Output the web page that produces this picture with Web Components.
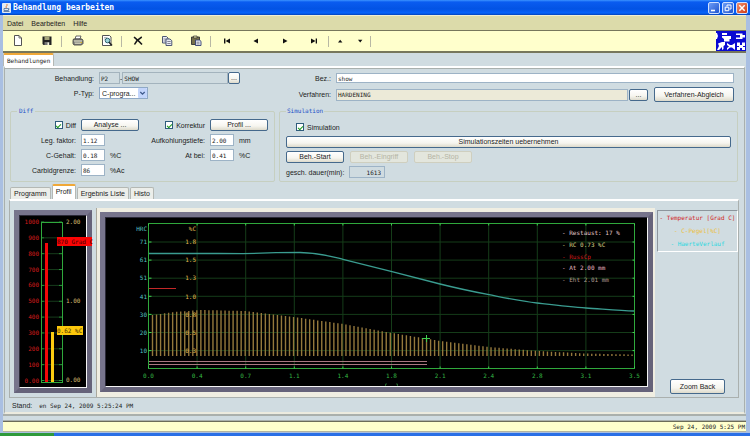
<!DOCTYPE html>
<html lang="de">
<head>
<meta charset="utf-8">
<title>Behandlung bearbeiten</title>
<style>
  html { height: 100%; }
  body { margin: 0; min-height: 100%; display: flex; background: #a9bfe2; }
  app-window { flex: 1; }
</style>
</head>
<body>
<app-window></app-window>
<script>
const BASE_CSS = `
  *, *::before, *::after { box-sizing: border-box; }
  :host { font: 7px/9px "Liberation Sans", Arial, sans-serif; color: #1c1c1c; }
  button, input, select { font: inherit; color: inherit; margin: 0; padding: 0; border-radius: 0; min-width: 0; }
  button { cursor: pointer; }
`;
const MONO = `"DejaVu Sans Mono", "Liberation Mono", monospace`;

class BaseElement extends HTMLElement {
  constructor() { super(); this.attachShadow({ mode: "open" }); }
  connectedCallback() {
    this.shadowRoot.innerHTML = `<style>${BASE_CSS}${this.styles()}</style>${this.render()}`;
  }
  attr(name, fallback = "") { return this.hasAttribute(name) ? this.getAttribute(name) : fallback; }
  styles() { return ""; }
  render() { return "<slot></slot>"; }
}

/* ---------- window chrome ---------- */
class TitleBar extends BaseElement {
  styles() { return `
    :host { display: flex; align-items: center; height: 15px; padding: 0 2px; gap: 2px;
      background: linear-gradient(#3c93ff 0, #0a5cf0 2px, #0353e4 9px, #0664fb 13px, #0242b8 15px); color: #fff; }
    h1 { flex: 1; margin: 0; font: bold 8px/12px ${MONO}; color: #fff; }
    .app { width: 9px; height: 10px; }
    button { width: 12px; height: 12px; border: 1px solid #cfe0ff; border-radius: 2px; display: grid; place-items: center;
      background: linear-gradient(135deg, #6c9cf6, #1f55cf); }
    button.close { background: linear-gradient(135deg, #f09070, #d03a12); }
    button svg { width: 8px; height: 8px; }`; }
  render() { return `
    <svg class="app" viewBox="0 0 9 10"><rect width="9" height="10" rx="1" fill="#e4ecf4"/><path d="M4.5 1c2 1.500-1.500 2 0 4" stroke="#e07020" fill="none"/><path d="M2 5.500h4.500v2H2zM6.500 6h1M1.500 8.500h6" stroke="#4a6c98" fill="none" stroke-width=".8"/></svg>
    <h1>${this.attr("heading")}</h1>
    <button aria-label="Minimieren"><svg viewBox="0 0 8 8"><path d="M1 6.500h4" stroke="#fff" stroke-width="1.600"/></svg></button>
    <button aria-label="Wiederherstellen"><svg viewBox="0 0 8 8" fill="none" stroke="#fff"><path d="M3 2.500V1h4v4H5.500"/><path d="M1.200 3.200h3.600v3.500H1.200z"/></svg></button>
    <button class="close" aria-label="Schliessen"><svg viewBox="0 0 8 8"><path d="M1.300 1.300l5.400 5.400M6.700 1.300L1.300 6.700" stroke="#fff" stroke-width="1.500"/></svg></button>`; }
}

class MenuBar extends BaseElement {
  styles() { return `
    :host { display: block; background: #dcdbaa; border-top: 1px solid #f0efd4; }
    nav { display: flex; gap: 8px; padding: 0 4px; height: 14px; align-items: center; }
    button { border: 0; background: none; }`; }
  render() {
    return `<nav>${this.attr("items").split(",").map(t => `<button>${t}</button>`).join("")}</nav>`;
  }
}

const ICONS = {
  neu: `<path d="M3.500 1.500h4.500l2.500 2.500v7.500h-7z" fill="#fff" stroke="#555"/><path d="M8 1.500v2.500h2.500" fill="none" stroke="#555" stroke-width=".8"/>`,
  speichern: `<path d="M2.500 2.500h9v8.500H3.500l-1-1z" fill="#222"/><path d="M4.500 2.500h5V6h-5z" fill="#a5a57c"/><path d="M4.500 8h5v3h-5z" fill="#777"/><path d="M7.500 8.500h1.500V11H7.500z" fill="#f4f4e0"/>`,
  drucken: `<path d="M5 2h5L9 5H4z" fill="#fff" stroke="#444" stroke-width=".8"/><path d="M2.500 5h8.500l1 1.500v3l-1.500 1.500H3L2 9.500v-3z" fill="#8b8b86" stroke="#333" stroke-width=".8"/><path d="M3 7h8M4 9.200h6" stroke="#e8e8cc" stroke-width=".9"/><path d="M9.500 8.500h1.500" stroke="#d6b020"/>`,
  vorschau: `<path d="M2.500 1.500h7l1.500 1.500v8.500H2.500z" fill="#fff" stroke="#555"/><path d="M4 3.500h3M4 5h1.500" stroke="#aaa" stroke-width=".8"/><circle cx="7.500" cy="6.500" r="2.300" fill="#9fd4d8" stroke="#2f6670"/><path d="M9 8.300l3 3.200" stroke="#222" stroke-width="1.500"/>`,
  loeschen: `<path d="M3 3c3 2.500 5.500 4.500 8 7.500M10.800 3C8 4.500 5 7.500 3.500 10.500" fill="none" stroke="#181818" stroke-width="1.500"/>`,
  kopieren: `<path d="M2.500 2.500h4l1.500 1.500V9H2.500z" fill="#e8ecf4" stroke="#3b4568" stroke-width=".9"/><path d="M3.500 5h3M3.500 7h3" stroke="#667" stroke-width=".7"/><path d="M6 5h4l1.800 1.700v4.800H6z" fill="#e8ecf4" stroke="#3b4568" stroke-width=".9"/><path d="M7.300 7.500h3.400M7.300 9.500h3.400" stroke="#667" stroke-width=".8"/>`,
  einfuegen: `<path d="M2.500 3h8v7.500H2.500z" fill="#77704a" stroke="#333" stroke-width=".9"/><path d="M4.500 2h3.500v2H4.500z" fill="#ded9a0" stroke="#333" stroke-width=".7"/><path d="M6.500 6h4l1.500 1.300v4.200H6.500z" fill="#e8ecf4" stroke="#333f70" stroke-width=".9"/><path d="M7.500 8.200h3M7.500 9.900h3" stroke="#667" stroke-width=".8"/>`,
  erster: `<path d="M4 4.500h1.400v5H4zM10 4.500v5L5.600 7z" fill="#111"/>`,
  zurueck: `<path d="M9 4.500v5L4.500 7z" fill="#111"/>`,
  weiter: `<path d="M5 4.500v5L9.500 7z" fill="#111"/>`,
  letzter: `<path d="M4 4.500v5L8.500 7zM8.700 4.500H10v5H8.700z" fill="#111"/>`,
  hoch: `<path d="M5 8.500h4.400L7.200 5.800z" fill="#111"/>`,
  runter: `<path d="M5 5.800h4.400L7.200 8.500z" fill="#111"/>`
};
class ToolButton extends BaseElement {
  styles() { return `
    :host { display: block; width: 29px; }
    :host([narrow]) { width: 20px; }
    button { display: grid; place-items: center; width: 100%; height: 20px; border: 0; background: none; }
    svg { width: 14px; height: 14px; }`; }
  render() { return `<button aria-label="${this.attr("icon")}"><svg viewBox="0 0 14 14">${ICONS[this.attr("icon")]}</svg></button>`; }
}
class ToolBar extends BaseElement {
  styles() { return `
    :host { display: flex; align-items: center; height: 23px; background: #ffffcc; border: solid #77775c; border-width: 1px 0 2px; }
    ::slotted(hr) { width: 1px; height: 11px; margin: 0 1px 0 0; border: 0; background: #b8b8a4; }
    .logo { width: 30px; height: 20px; margin-left: auto; }`; }
  render() { return `<slot></slot>
    <svg class="logo" viewBox="0 0 30 20"><rect width="30" height="20" fill="#0a0ad2"/>
      <path fill="#fff" d="M0 2h1l1 3-1 3H0zM6 2h5v2H6zM6 5h9v3h-1.500v2.500H8V8L6 6.500zM20 2.500h6.500v1.500H29v2.500h-2.500V8H20V6.500h4V4h-4zM2 12.500l4-1.500h3v3L7.500 15v3L6 19v-3l-3 3H1l2-4zM11 12l3 2h2l3-2v7l-3-2.500h-2L11 19v-2l2-1.500-2-1.500zM21 11.500h3V14h2v-2.500h3V15h-2v1h2v3h-3v-2h-2v2h-3v-3h2v-1h-2z"/></svg>`; }
}

/* ---------- controls ---------- */
class PushButton extends BaseElement {
  styles() { return `
    :host { display: block; height: 12px; }
    button { display: block; width: 100%; height: 100%; border: 1px solid #45698c; border-radius: 2px; line-height: 8px;
      white-space: nowrap; background: linear-gradient(#fff, #f6f5ef 60%, #dddacb); }
    button:disabled { color: #b4b4a4; border-color: #cfcfbf; background: #e3e6dd; }`; }
  render() { return `<button ${this.hasAttribute("disabled") ? "disabled" : ""}>${this.attr("text")}</button>`; }
}
class CheckBox extends BaseElement {
  styles() { return `
    :host { display: flex; align-items: center; height: 12px; }
    label { display: flex; align-items: center; gap: 3px; white-space: nowrap; }
    input { appearance: none; width: 8px; height: 8px; border: 1px solid #2f5c7c; background: #fff; display: grid; place-items: center; }
    input:checked::before { content: ""; width: 5px; height: 3px; border: solid #1c9a1c; border-width: 0 0 1px 1px; transform: rotate(-45deg); }`; }
  render() { return `<label><input type="checkbox" checked>${this.attr("label")}</label>`; }
}
class TextField extends BaseElement {
  styles() { return `
    :host { display: flex; align-items: center; gap: var(--field-gap, 5px); height: 12px; }
    label { width: var(--label-width, 65px); text-align: right; white-space: nowrap; }
    :host([label-left]) label { text-align: left; }
    input { width: var(--input-width, 24px); height: var(--input-height, 12px); padding: 0 1px; border: 1px solid #9db3c6; background: #fff;
      font: 6px/8px ${MONO}; outline: 0; }
    :host([wide]) { flex: 1; min-width: 0; }
    :host([wide]) input { flex: 1; }
    :host([tone="locked"]) input { background: #cfdbe0; }
    :host([tone="sand"]) input { background: #ecead8; }
    :host([right]) input { text-align: right; padding-right: 3px; }`; }
  render() { return `<label for="f">${this.attr("label")}</label>
    <input id="f" value="${this.attr("value")}">${this.attr("unit") ? `<span>${this.attr("unit")}</span>` : ""}`; }
}
class TreatmentField extends BaseElement {
  styles() { return `
    :host { display: flex; align-items: center; height: 12px; }
    label { width: 84px; margin-right: 5px; text-align: right; }
    input { height: 12px; border: 1px solid #a3b3bd; background: #cfdbe0; padding: 0 1px; font: 6px/8px ${MONO}; }
    .id { width: 21px; } .name { flex: 1; }
    push-button { width: 12px; }`; }
  render() { return `<label for="id">Behandlung:</label><input class="id" id="id" value="P2">
    <span>-</span><input class="name" aria-label="Name" value="SHOW"><push-button text="..."></push-button>`; }
}
class SelectField extends BaseElement {
  styles() { return `
    :host { display: flex; align-items: center; gap: 5px; height: 12px; }
    label { width: 84px; text-align: right; }
    .wrap { display: grid; width: 49px; height: 12px; }
    select, svg { grid-area: 1 / 1; }
    select { appearance: none; width: 100%; height: 12px; padding: 0 2px; border: 1px solid #8fa9c6; background: #fff; }
    svg { justify-self: end; align-self: center; width: 9px; height: 10px; margin-right: 1px; pointer-events: none; }`; }
  render() { return `<label for="s">${this.attr("label")}</label><div class="wrap">
    <select id="s"><option>${this.attr("value")}</option></select>
    <svg viewBox="0 0 9 10"><rect width="9" height="10" rx="1" fill="#c3d5fb"/><path d="M2.300 4l2.200 2.200L6.700 4" fill="none" stroke="#3f5a8c" stroke-width="1.300"/></svg></div>`; }
}
class GroupBox extends BaseElement {
  styles() { return `
    :host { display: block; min-width: 0; }
    fieldset { margin: 0; min-width: 0; height: 100%; border: 1px solid #c6cfc0; border-radius: 2px; padding: 4px 0 5px; }
    :host([inset]) fieldset { padding: 6px 6px 3px; }
    legend { margin-left: 6px; padding: 0 2px; height: 8px; font: 6px/8px ${MONO}; color: #1c50c8; }
    :host([inset]) legend { margin-left: 0; padding: 0 1px; }`; }
  render() { return `<fieldset><legend>${this.attr("heading")}</legend><slot></slot></fieldset>`; }
}

/* ---------- form ---------- */
class TreatmentForm extends BaseElement {
  styles() { return `
    :host { display: grid; grid-template-columns: 265px minmax(0, 1fr); column-gap: 4px; row-gap: 5px; padding: 3px 6px 0 5px; }
    .left { display: grid; gap: 3px; align-content: start; padding-right: 35px; }
    .right { display: grid; gap: 3px; padding-right: 4px; --label-width: 52px; }
    .bez { --input-height: 10px; }
    .row { display: flex; align-items: center; height: 15px; gap: 1px; }
    .row .more { width: 19px; } .row .match { width: 80px; height: 15px; margin-left: 5px; }
    .diff { display: grid; grid-template-columns: 129px 1fr; row-gap: 3px; }
    .pair { display: grid; grid-template-columns: 65px 58px; column-gap: 5px; }
    .pair check-box { justify-self: end; }
    .sim { display: grid; row-gap: 3px; }
    .sim check-box { margin-left: 10px; }
    .actions { display: grid; grid-template-columns: repeat(3, 58px); gap: 6px; }
    .dauer { --label-width: 60px; --input-width: 36px; --field-gap: 3px; }`; }
  render() { return `
    <div class="left"><treatment-field></treatment-field><select-field label="P-Typ:" value="C-progra..."></select-field></div>
    <div class="right">
      <text-field class="bez" wide label="Bez.:" value="show"></text-field>
      <div class="row"><text-field wide tone="sand" label="Verfahren:" value="HARDENING"></text-field>
        <push-button class="more" text="..."></push-button><push-button class="match" text="Verfahren-Abgleich"></push-button></div>
    </div>
    <group-box heading="Diff"><div class="diff">
      <div class="pair"><check-box label="Diff"></check-box><push-button text="Analyse ..."></push-button></div>
      <div class="pair"><check-box label="Korrektur"></check-box><push-button text="Profil ..."></push-button></div>
      <text-field label="Leg. faktor:" value="1.12"></text-field>
      <text-field label="Aufkohlungstiefe:" value="2.00" unit="mm"></text-field>
      <text-field label="C-Gehalt:" value="0.18" unit="%C"></text-field>
      <text-field label="At bei:" value="0.41" unit="%C"></text-field>
      <text-field label="Carbidgrenze:" value="86" unit="%Ac"></text-field>
    </div></group-box>
    <group-box inset heading="Simulation"><div class="sim">
      <check-box label="Simulation"></check-box>
      <push-button text="Simulationszeiten uebernehmen"></push-button>
      <div class="actions"><push-button text="Beh.-Start"></push-button><push-button disabled text="Beh.-Eingriff"></push-button><push-button disabled text="Beh.-Stop"></push-button></div>
      <text-field class="dauer" label-left right tone="locked" label="gesch. dauer(min):" value="1613"></text-field>
    </div></group-box>`; }
}

class TabStrip extends BaseElement {
  styles() { return `
    :host { display: flex; align-items: flex-end; gap: 1px; height: 15px; }
    button { height: 12px; padding: 0 3px; border: 1px solid #b4b8b4; border-bottom: 0; border-radius: 2px 2px 0 0; background: #eceeea; white-space: nowrap; }
    button[aria-selected="true"] { height: 15px; padding-bottom: 2px; border-top: 2px solid #f0a838; background: #fff; }
    :host([mono]) { height: 13px; }
    :host([mono]) button { height: 13px; padding: 0 3px; font: 6px/8px ${MONO}; }`; }
  render() {
    const sel = this.attr("selected");
    return this.attr("items").split(",").map(t => `<button role="tab" aria-selected="${t === sel}">${t}</button>`).join("");
  }
}

/* ---------- charts ---------- */
class BezelFrame extends BaseElement {
  styles() { return `
    :host { display: block; border: 5px solid; border-color: #77748c #66637a #66637a #77748c; background: #000; }
    div { border: 1px solid; border-color: #2b2938 #f4f4f4 #f4f4f4 #2b2938; }`; }
  render() { return `<div><slot></slot></div>`; }
}
const SVG_CSS = `:host { display: block; } svg { display: block; width: 100%; height: auto; overflow: visible; } text { font: 6px ${MONO}; }`;

class GaugeChart extends BaseElement {
  styles() { return SVG_CSS; }
  render() {
    let s = "";
    for (let i = 0; i <= 10; i++) {
      const y = 222 + i * 15.85;
      const v = i === 10 ? "0.00" : String(1000 - i * 100);
      s += `<text x="39" y="${y + 2}" text-anchor="end" fill="#d41c1c">${v}</text>`;
      s += `<path d="M41 ${y}h3M59 ${y}h3" stroke="#2a9a3a"/><path d="M44 ${y}h15" stroke="#173d1c"/>`;
    }
    return `<svg viewBox="20 216 66 171">${s}
      <rect x="41.500" y="222.500" width="21" height="160" fill="none" stroke="#2fa83c"/>
      <rect x="45" y="243" width="3" height="139" fill="#f40808"/><rect x="51" y="332" width="3" height="50" fill="#fccb10"/>
      <g fill="#d8bd70"><text x="66" y="224">2.00</text><text x="66" y="303">1.00</text><text x="66" y="382">0.00</text></g>
      <rect x="57" y="237" width="35" height="9" fill="#fb0404"/><text x="57" y="244" fill="#400">870 Grad C</text>
      <rect x="57" y="326" width="26" height="9" fill="#fdc80c"/><text x="57" y="333" fill="#432f00">0.62 %C</text></svg>`;
  }
}

class ProfileChart extends BaseElement {
  styles() { return SVG_CSS; }
  barTop(x) {
    const p = [[152,315],[175,312],[200,310],[246,311],[294,317],[343,324],[392,333],[426,338.5],[440,341],[489,347],[537,351],[586,353.5],[634,354.6]];
    for (let i = 1; i < p.length; i++) {
      if (x <= p[i][0]) {
        const [a, b] = [p[i - 1], p[i]];
        return a[1] + (b[1] - a[1]) * (x - a[0]) / (b[0] - a[0]);
      }
    }
    return 354.6;
  }
  render() {
    const L = 148.5, R = 634.5, T = 223.5, B = 368.5, step = (R - L) / 10;
    let grid = "", ticks = "", labels = "", bars = "";
    ["0.0","0.4","0.7","1.1","1.4","1.8","2.1","2.4","2.8","3.1","3.5"].forEach((t, i) => {
      const x = L + i * step;
      if (i && i < 10) grid += `M${x} ${T}V${B}`;
      ticks += `M${x} ${B - 2}v2M${x} ${T}v2`;
      labels += `<text x="${x}" y="378" text-anchor="middle" fill="#35b845">${t}</text>`;
    });
    const hrc = ["71","61","51","41","30","20","10"], pc = ["1.8","1.5","1.3","1.0","0.8","0.5","0.3"];
    hrc.forEach((t, i) => {
      const y = 242 + i * 18.1;
      grid += `M${L} ${y}H${R}`;
      ticks += `M${L} ${y}h3M${R} ${y}h-2`;
      labels += `<text x="147" y="${y + 2.200}" text-anchor="end" fill="#52c4c4">${t}</text>`;
    });
    for (let x = 152.5; x < 633; x += 4.03) bars += `M${x} 356V${this.barTop(x)}`;
    pc.forEach((t, i) => {
      labels += `<text x="196" y="${244.2 + i * 18.1}" text-anchor="end" fill="#e0bc50">${t}</text>`;
    });
    const notes = [["- Restaust: 17 %","#e6c8cc"],["- RC 0.73 %C","#dcd284"],["- RussCp","#d01c1c"],["- At 2.00 mm","#eab8c6"],["- Eht 2.01 mm","#b09a92"]]
      .map(([t, c], i) => `<text x="562" y="${235 + i * 11.75}" fill="${c}">${t}</text>`).join("");
    return `<svg viewBox="106 218 541 168">
      <path d="${grid}" stroke="#153c19" fill="none"/>
      <path d="${bars}" stroke="#94783c" stroke-width="1.400" fill="none"/>
      <path d="M${L} ${T}H${R}V${B}H${L}z" stroke="#2fa83c" fill="none"/><path d="${ticks}" stroke="#3fcf50" fill="none"/>
      <path d="M149 361.500H427M149 364.500H427" stroke="#a87880" fill="none"/>
      <path d="M149 288.500H176" stroke="#c42828" fill="none"/>
      <path d="M149 253.500H218L243 253.700L276 252.700L300 252.500C320 253 330 256 343 259.300L392 271.700L440 284C460 289 475 292 489 294.700S520 301 537 303S570 307 586 308S620 310.500 634 311" stroke="#3a9c90" stroke-width="1.300" fill="none"/>
      <path d="M422 338.500h8M426.500 335v7" stroke="#3fcf50" fill="none"/>
      <text x="147" y="231" text-anchor="end" fill="#52c4c4">HRC</text><text x="196" y="231" text-anchor="end" fill="#e0bc50">%C</text>
      ${labels}${notes}
      <path d="M387 384h-1.500v2M396 384h1.500v2" stroke="#2a7a32" fill="none" stroke-width=".8"/></svg>`;
  }
}

class SeriesLegend extends BaseElement {
  styles() { return `
    :host { display: block; }
    ul { list-style: none; margin: 0; padding: 0 0 1px; border: 1px solid; border-color: #8d959c #fff #fff #8d959c; }
    li { height: 13px; font: 6px/13px ${MONO}; text-align: center; white-space: nowrap; }`; }
  render() { return `<ul><li style="color:#d01c24">- Temperatur [Grad C]</li><li style="color:#ecc040">- C-Pegel[%C]</li><li style="color:#28d8e0">- HaerteVerlauf</li></ul>`; }
}

class ProfilePanel extends BaseElement {
  styles() { return `
    :host { display: flex; margin: 0 5px 0 4px; padding: 7px 0 0 4px; border: solid #aab0ae; border-width: 2px 1px 1px; border-top-color: #fff; }
    .gauge { width: 78px; margin: 2px 4px 4px 0; align-self: flex-start; }
    .plot { flex: 1; min-width: 0; padding: 4px 2px 4px 3px; background: #f0eee2; border-left: 1px solid #aaa89c; }
    aside { width: 81px; margin: 2px 0 3px 2px; display: flex; flex-direction: column; justify-content: space-between; }
    aside push-button { width: 55px; height: 15px; align-self: center; }`; }
  render() { return `
    <bezel-frame class="gauge"><gauge-chart></gauge-chart></bezel-frame>
    <div class="plot"><bezel-frame><profile-chart></profile-chart></bezel-frame></div>
    <aside><series-legend></series-legend><push-button text="Zoom Back"></push-button></aside>`; }
}

class StatusBar extends BaseElement {
  styles() { return `
    :host { display: flex; justify-content: flex-end; height: 11px; padding-right: 1px; background: #ffffcc; border-top: 1px solid #6c6c58; border-bottom: 1px solid #b4b4a0; font: 6px/9px ${MONO}; }`; }
}

/* ---------- page ---------- */
class AppWindow extends BaseElement {
  styles() { return `
    :host { display: flex; flex-direction: column; min-width: 0; }
    .frame { flex: 1; display: flex; flex-direction: column; margin: 0 4px 0 3px; background: #d0dce1; }
    .sheet { flex: 1; margin: 0 1px; border: 1px solid #a9b0ae; border-top: 2px solid #fff; box-shadow: inset 0 1px #a9b0ae; padding-top: 1px; border-bottom: 2px solid #ecebdf; }
    .tabs { margin: 2px 0 0 5px; }
    .stand { display: flex; align-items: center; gap: 7px; height: 14px; padding-left: 7px; }
    .stand time { font: 6px/9px ${MONO}; }
    .strip { height: 7px; border: solid #aab0ac; border-width: 2px 0 1px; }
    .task { height: 3px; background: linear-gradient(90deg, #2f9a3a 54px, #2a6fe6 54px); margin-top: 1px; }`; }
  render() { return `
    <title-bar heading="Behandlung bearbeiten"></title-bar>
    <div class="frame">
      <menu-bar items="Datei,Bearbeiten,Hilfe"></menu-bar>
      <tool-bar>
        <tool-button icon="neu"></tool-button><tool-button icon="speichern"></tool-button><hr>
        <tool-button icon="drucken"></tool-button><tool-button icon="vorschau"></tool-button><hr>
        <tool-button icon="loeschen"></tool-button><tool-button icon="kopieren"></tool-button><tool-button icon="einfuegen"></tool-button><hr>
        <tool-button icon="erster"></tool-button><tool-button icon="zurueck"></tool-button><tool-button icon="weiter"></tool-button><tool-button icon="letzter"></tool-button><hr>
        <tool-button narrow icon="hoch"></tool-button><tool-button narrow icon="runter"></tool-button><hr>
      </tool-bar>
      <tab-strip mono items="Behandlungen" selected="Behandlungen"></tab-strip>
      <div class="sheet">
        <treatment-form></treatment-form>
        <tab-strip class="tabs" items="Programm,Profil,Ergebnis Liste,Histo" selected="Profil"></tab-strip>
        <profile-panel></profile-panel>
        <div class="stand"><span>Stand:</span><time>en Sep 24, 2009 5:25:24 PM</time></div>
      </div>
      <div class="strip"></div>
      <status-bar>Sep 24, 2009 5:25 PM</status-bar>
    </div>
    <div class="task"></div>`; }
}

[["title-bar", TitleBar], ["menu-bar", MenuBar], ["tool-button", ToolButton], ["tool-bar", ToolBar], ["push-button", PushButton],
 ["check-box", CheckBox], ["text-field", TextField], ["treatment-field", TreatmentField], ["select-field", SelectField],
 ["group-box", GroupBox], ["treatment-form", TreatmentForm], ["tab-strip", TabStrip], ["bezel-frame", BezelFrame],
 ["gauge-chart", GaugeChart], ["profile-chart", ProfileChart], ["series-legend", SeriesLegend], ["profile-panel", ProfilePanel],
 ["status-bar", StatusBar], ["app-window", AppWindow]].forEach(([n, c]) => customElements.define(n, c));
</script>
</body>
</html>
